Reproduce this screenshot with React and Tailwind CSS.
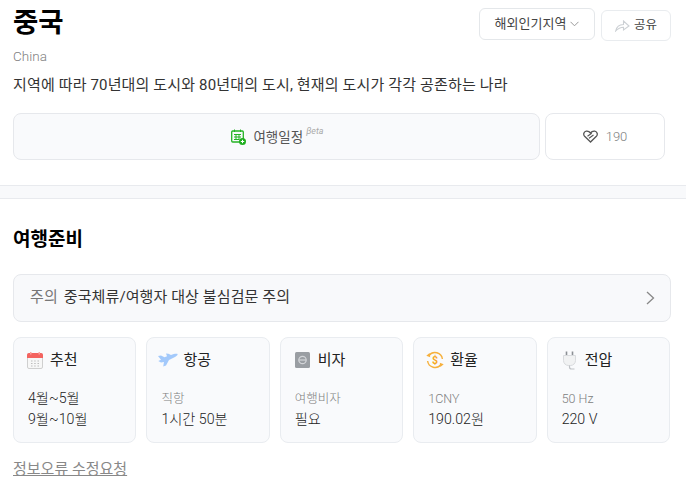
const font = { fontFamily: '"Roboto", "Noto Sans CJK KR", sans-serif' };

function CalendarIcon() {
  return (
    <svg width="16" height="17" viewBox="0 0 16 17">
      <rect x="0.5" y="1.5" width="15" height="15" rx="1.5" fill="#f7f7f7" stroke="#cfcfcf" />
      <path d="M0 3a2 2 0 0 1 2-2h12a2 2 0 0 1 2 2v3H0z" fill="#f4635f" />
      <rect x="3" y="0" width="1.5" height="2.5" fill="#f9a19e" />
      <rect x="11.5" y="0" width="1.5" height="2.5" fill="#f9a19e" />
      <path d="M4 9h1.5M7.2 9h1.5M10.5 9h1.5M4 11.5h1.5M7.2 11.5h1.5M10.5 11.5h1.5M4 14h1.5M7.2 14h1.5M10.5 14h1.5" stroke="#bdbdbd" strokeWidth="1.2" />
    </svg>
  );
}

function PlaneIcon() {
  return (
    <svg width="20" height="14" viewBox="0 0 20 14">
      <path d="M0 3 L3 2.5 L6.500 4.200 L9 3.300 L8 0.500 L10.500 0.800 L13 2 C15.500 1 18.500 0.300 19.600 1 C20 2.200 18 3.600 16 4.600 L11 7 L8 12.500 L5.200 13.500 L6 9 L3 9.600 L0.300 8 L3 6.800 Z" fill="#a3c9fb" />
    </svg>
  );
}

function VisaIcon() {
  return (
    <svg width="15" height="16" viewBox="0 0 15 16">
      <rect width="15" height="16" rx="1.5" fill="#9a9ea3" />
      <circle cx="7.5" cy="8" r="3.7" fill="none" stroke="#d3d5d8" strokeWidth="1.2" />
      <path d="M3.8 8h7.4" stroke="#d3d5d8" strokeWidth="1.2" />
    </svg>
  );
}

function ExchangeIcon() {
  return (
    <svg width="18" height="18" viewBox="0 0 18 18" fill="none">
      <path d="M3 4.5A7.5 7.5 0 0 1 16.4 8" stroke="#f6b03c" strokeWidth="1.4" />
      <path d="M15 13.5A7.5 7.5 0 0 1 1.6 10" stroke="#f6b03c" strokeWidth="1.4" />
      <path d="M0.3 4.8 L4.2 6.2 L3.6 2 Z" fill="#f6b03c" />
      <path d="M17.7 13.2 L13.8 11.8 L14.4 16 Z" fill="#f6b03c" />
      <text x="9" y="12.6" textAnchor="middle" fontSize="10.5" fontWeight="700" fill="#f6a823" fontFamily="Roboto, sans-serif">$</text>
    </svg>
  );
}

function PlugIcon() {
  return (
    <svg width="16" height="19" viewBox="0 0 16 19" fill="none">
      <path d="M4.500 0.500v4M10.500 0.500v4" stroke="#8b8f94" strokeWidth="1.600" />
      <path d="M1.500 4.500h12v5a5 5 0 0 1-5 5h-2a5 5 0 0 1-5-5z" fill="#f1f2f3" stroke="#d9dbde" />
      <path d="M7.500 14.500v1.500a2 2 0 0 0 2 2h3" stroke="#bfc2c6" strokeWidth="1.200" />
    </svg>
  );
}

const cards = [
  { icon: <CalendarIcon />, title: "추천", gap: "gap-[7px]", pad: "pl-[13px]", lines: ["4월~5월", "9월~10월"] },
  { icon: <PlaneIcon />, title: "항공", gap: "gap-[5px]", pad: "pl-[11px]", sub: "직항", value: "1시간 50분" },
  { icon: <VisaIcon />, title: "비자", gap: "gap-[8px]", pad: "pl-[14px]", sub: "여행비자", value: "필요" },
  { icon: <ExchangeIcon />, title: "환율", gap: "gap-[6px]", pad: "pl-[12px]", sub: "1CNY", value: "190.02원" },
  { icon: <PlugIcon />, title: "전압", gap: "gap-[7px]", pad: "pl-[14px]", sub: "50 Hz", value: "220 V" },
];

function InfoCard({ card }) {
  return (
    <div className="h-[106px] flex-1 rounded-lg border border-[#e9ecf0] bg-[#f9fafc]">
      <div className={`mt-[12px] flex h-[20px] items-center ${card.gap} ${card.pad}`}>
        {card.icon}
        <span className="text-[15px] text-[#222]">{card.title}</span>
      </div>
      <div className="mt-[18px] pl-[14px] text-[14.2px] leading-[21px] font-light text-[#222]">
        {card.lines ? (
          card.lines.map((line) => <div key={line}>{line}</div>)
        ) : (
          <>
            <div className="text-[12.5px] text-[#808080]">{card.sub}</div>
            <div>{card.value}</div>
          </>
        )}
      </div>
    </div>
  );
}

export default function App() {
  return (
    <div className="h-[496px] w-[686px] overflow-hidden bg-white" style={font}>
      <div className="h-[185px] px-[13px]">
        <div className="flex h-[44px] items-start justify-between pr-[2px]">
          <h1 className="mt-[4px] text-[27.5px] leading-[38px] font-bold text-black">중국</h1>
          <div className="mt-[8px] flex items-start gap-[6px]">
            <button className="flex h-[32px] w-[116px] items-center justify-center gap-[4px] rounded-md border border-[#e4e7ea] text-[13px] text-[#444]">
              해외인기지역
              <svg width="9" height="6" viewBox="0 0 9 6" fill="none">
                <path d="M0.500 0.800 4.500 4.800 8.500 0.800" stroke="#999" />
              </svg>
            </button>
            <button className="mt-[2px] flex h-[31px] w-[70px] items-center justify-center gap-[4px] rounded-md border border-[#e9ecef] text-[12.5px] text-[#444]">
              <svg width="15" height="12" viewBox="0 0 15 12" fill="none">
                <path d="M0.700 11C1.500 7 4.500 4.500 8.500 4.500V1L14 6 8.500 10V7.300C5.500 7.300 3 8.500 0.700 11Z" stroke="#ccd0d4" strokeWidth="1.100" />
              </svg>
              공유
            </button>
          </div>
        </div>
        <p className="mt-[2px] text-[13.5px] leading-[20px] font-light text-[#808080]">China</p>
        <p className="mt-[9px] text-[15px] leading-[20px] tracking-[0.15px] text-[#333]">
          지역에 따라 70년대의 도시와 80년대의 도시, 현재의 도시가 각각 공존하는 나라
        </p>
        <div className="mt-[18px] flex gap-[5px]">
          <button className="flex h-[47px] w-[527px] items-center justify-center rounded-lg border border-[#e6e8ec] bg-[#f9fafc] pl-[2px] text-[13.5px] text-[#555]">
            <svg width="15" height="16" viewBox="0 0 15 16" fill="none" className="mr-[7px]">
              <rect x="0.700" y="2" width="11.600" height="11" rx="1" stroke="#24b324" strokeWidth="1.300" />
              <path d="M3.500 0.500v2.500M9.500 0.500v2.500M3 5.500h7M3 8h7M3 10.500h5M5 5v6M8 5v6" stroke="#24b324" />
              <circle cx="11.500" cy="12.500" r="3.500" fill="#1fae1f" />
              <path d="M9.800 12.500h3.400M11.500 10.800v3.400" stroke="#fff" />
            </svg>
            <span className="translate-y-px">여행일정</span>
            <span className="mb-[10px] ml-[3px] text-[9px] text-[#aaa] italic">βeta</span>
          </button>
          <button className="flex h-[47px] w-[120px] items-center justify-center gap-[8px] rounded-lg border border-[#e6e8ec] text-[13px] font-light text-[#808080]">
            <svg width="15" height="13" viewBox="0 0 15 13" fill="none">
              <path d="M7.500 12 1.600 6.300C0 4.600 0.700 1.600 3.200 1.100 5 0.800 6.500 1.600 7.500 3 8.500 1.600 10 0.800 11.800 1.100 14.300 1.600 15 4.600 13.400 6.300Z" stroke="#555" strokeWidth="1.300" />
              <path d="M4.500 6.300 8.700 3.300M6 8.300 10.500 5" stroke="#555" strokeWidth="1.100" />
            </svg>
            190
          </button>
        </div>
      </div>

      <div className="h-[14px] border-y border-[#e8eaee] bg-[#f8f9fb]" />

      <div className="px-[13px]">
        <h2 className="mt-[27px] text-[19px] leading-[28px] font-bold text-black">여행준비</h2>
        <div className="mt-[20px] flex h-[48px] w-[658px] items-center justify-between rounded-lg border border-[#e6e8ec] bg-[#f8f9fb] pr-[15px] pl-[16px] text-[15px] tracking-[0.1px]">
          <div className="-translate-y-px">
            <span className="mr-[6px] text-[#777]">주의</span>
            <span className="text-[#333]">중국체류/여행자 대상 불심검문 주의</span>
          </div>
          <svg width="9" height="14" viewBox="0 0 9 14" fill="none">
            <path d="M1 1l6.500 6L1 13" stroke="#888" strokeWidth="1.300" />
          </svg>
        </div>
        <div className="mt-[15px] flex w-[657px] gap-[10px]">
          {cards.map((card) => (
            <InfoCard key={card.title} card={card} />
          ))}
        </div>
        <a className="mt-[16px] block text-[15px] leading-[20px] text-[#888] underline">정보오류 수정요청</a>
      </div>
    </div>
  );
}
